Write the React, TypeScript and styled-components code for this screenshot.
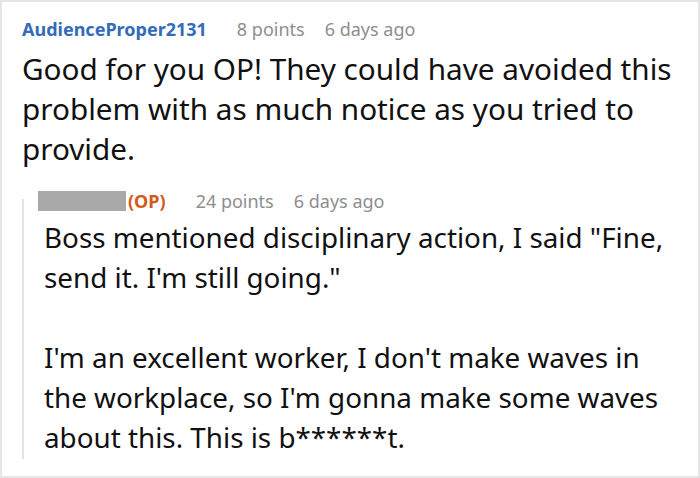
import React from "react";
import styled, { createGlobalStyle } from "styled-components";

const Global = createGlobalStyle`
  html, body { margin: 0; padding: 0; background: #ffffff; }
  body { font-family: "Noto Sans", "Open Sans", sans-serif; }
`;

const Card = styled.div`
  box-sizing: border-box;
  width: 700px;
  height: 478px;
  border: 2px solid #e6e6e6;
  padding: 15px 8px 0 20px;
  overflow: hidden;
  background: #fff;
`;

const Meta = styled.div`
  display: flex;
  align-items: baseline;
  font-size: 18px;
  line-height: 24px;
  white-space: nowrap;
`;

const Author = styled.span<{ $op?: boolean }>`
  font-weight: 700;
  color: ${(p) => (p.$op ? "#d35a1d" : "#336bb8")};
  margin-right: 30px;
`;

const Redacted = styled.span`
  display: inline-block;
  width: 88px;
  height: 20px;
  background: #a9a9a9;
  margin-right: 2px;
  align-self: center;
`;

const Points = styled.span`
  color: #8e8e8e;
  margin-right: 20px;
`;

const Time = styled.span`
  color: #8e8e8e;
`;

const Body = styled.div`
  font-size: 29.7px;
  line-height: 40px;
  color: #111;
  margin-top: 7.5px;
`;

const ReplyBody = styled.div`
  font-size: 27.8px;
  line-height: 40px;
  color: #111;
  padding: 0 20px 0 6px;
  margin-top: 4px;
`;

const Para = styled.p`
  margin: 0 0 40px 0;
  &:last-child { margin-bottom: 0; }
`;

const Reply = styled.div`
  position: relative;
  margin-top: 20.5px;
  padding-left: 16px;
  &::before {
    content: "";
    position: absolute;
    left: 0;
    top: 10px;
    bottom: -2px;
    width: 2px;
    background: #e3e3e3;
  }
`;

export default function App() {
  return (
    <>
      <Global />
      <Card>
        <Meta>
          <Author>AudienceProper2131</Author>
          <Points>8 points</Points>
          <Time>6 days ago</Time>
        </Meta>
        <Body>
          Good for you OP! They could have avoided this problem with as much
          notice as you tried to provide.
        </Body>
        <Reply>
          <Meta>
            <Redacted />
            <Author $op>(OP)</Author>
            <Points>24 points</Points>
            <Time>6 days ago</Time>
          </Meta>
          <ReplyBody>
            <Para>
              Boss mentioned disciplinary action, I said "Fine, send it. I'm
              still going."
            </Para>
            <Para>
              I'm an excellent worker, I don't make waves in the workplace, so
              I'm gonna make some waves about this. This is b******t.
            </Para>
          </ReplyBody>
        </Reply>
      </Card>
    </>
  );
}
